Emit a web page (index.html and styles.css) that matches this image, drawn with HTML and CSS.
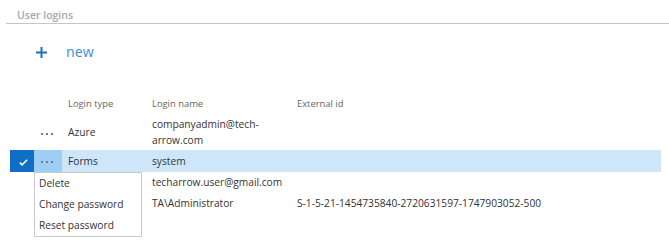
FILE: index.html
```html
<!DOCTYPE html>
<html lang="en">

<head>
    <meta charset="UTF-8">
    <title>User logins</title>
    <link rel="stylesheet" href="styles.css">
</head>

<body>
    <section class="panel">
        <h2 class="panel-title">User logins</h2>

        <div class="toolbar">
            <span class="plus">
                <svg width="11" height="11" viewBox="0 0 11 11"><path d="M5.5 0v11M0 5.5h11" stroke="#1b6ec2" stroke-width="2"/></svg>
            </span>
            <span class="new-link">new</span>
        </div>

        <table class="logins">
            <colgroup>
                <col class="col-check">
                <col class="col-dots">
                <col class="col-type">
                <col class="col-name">
                <col>
            </colgroup>
            <thead>
                <tr>
                    <th></th>
                    <th></th>
                    <th>Login type</th>
                    <th>Login name</th>
                    <th>External id</th>
                </tr>
            </thead>
            <tbody>
                <tr>
                    <td class="cell-check"></td>
                    <td class="cell-dots"><span class="dots"><i></i><i></i><i></i></span></td>
                    <td>Azure</td>
                    <td>companyadmin@tech-<br>arrow.com</td>
                    <td></td>
                </tr>
                <tr class="selected">
                    <td class="cell-check">
                        <svg width="9" height="7" viewBox="0 0 9 7"><path d="M0.8 3.6l2.3 2.3L8.2 0.8" fill="none" stroke="#fff" stroke-width="1.5"/></svg>
                    </td>
                    <td class="cell-dots menu-cell">
                        <span class="dots"><i></i><i></i><i></i></span>
                        <ul class="menu">
                            <li>Delete</li>
                            <li>Change password</li>
                            <li>Reset password</li>
                        </ul>
                    </td>
                    <td>Forms</td>
                    <td>system</td>
                    <td></td>
                </tr>
                <tr>
                    <td class="cell-check"></td>
                    <td class="cell-dots"></td>
                    <td></td>
                    <td>techarrow.user@gmail.com</td>
                    <td></td>
                </tr>
                <tr>
                    <td class="cell-check"></td>
                    <td class="cell-dots"></td>
                    <td></td>
                    <td>TA\Administrator</td>
                    <td>S-1-5-21-1454735840-2720631597-1747903052-500</td>
                </tr>
            </tbody>
        </table>
    </section>
</body>

</html>
```

FILE: styles.css
```css
/* Reset */

* {
    padding: 0;
    margin: 0;
    box-sizing: border-box;
}

body {
    min-height: 100vh;
    font-family: "Open Sans", "Noto Sans", sans-serif;
    font-size: 10.2px;
    color: #333;
    background-color: #fff;
}

/* Panel */

.panel {
    padding: 7px 0 0 6px;
}

.panel-title {
    font-size: 10.5px;
    font-weight: 600;
    color: #a8a8a8;
    padding-left: 11px;
    line-height: 16px;
    border-bottom: 1px solid #c6c6c6;
}

.toolbar {
    display: flex;
    align-items: center;
    height: 22px;
    margin: 17px 0 0 30px;
}

.plus {
    display: flex;
    width: 30px;
}

.new-link {
    font-size: 14.2px;
    color: #3b8dd6;
    line-height: 20px;
}

/* Table */

.logins {
    table-layout: fixed;
    border-collapse: collapse;
    margin: 31px 0 0 4px;
    width: 651px;
}

.col-check {
    width: 24px;
}

.col-dots {
    width: 28px;
}

.col-type {
    width: 84px;
}

.col-name {
    width: 145px;
}

.logins th {
    font-weight: normal;
    color: #666;
    text-align: left;
    font-size: 9.4px;
    line-height: 16px;
    padding: 2px 6px 3px;
}

.logins td {
    height: 21px;
    line-height: 16px;
    padding: 1px 6px 2px;
    vertical-align: middle;
    color: #333;
}

.logins td.cell-check,
.logins td.cell-dots {
    padding: 0;
    text-align: center;
}

.dots {
    display: inline-flex;
    gap: 3px;
    margin-right: 2px;
    vertical-align: middle;
}

.dots i {
    width: 2px;
    height: 2px;
    background-color: #7a7a7a;
}

.cell-check svg {
    display: inline-block;
    vertical-align: middle;
    margin-left: 2px;
}

/* Selected row */

.selected td {
    height: 22px;
    background-color: #cde6fa;
    padding-top: 3px;
    padding-bottom: 3px;
}

.selected td.cell-check {
    background-color: #0f6fc6;
}

.selected td.cell-dots {
    background-color: #9ecdf5;
}

.selected .dots i {
    background-color: #6f7f8c;
}

/* Dropdown menu */

.menu-cell {
    position: relative;
}

.menu {
    position: absolute;
    left: 0;
    top: 100%;
    width: 108px;
    list-style: none;
    background-color: #fff;
    border: 1px solid #c8c8c8;
    text-align: left;
    z-index: 2;
}

.menu li {
    line-height: 21px;
    padding-left: 4px;
    color: #333;
    white-space: nowrap;
}
```
